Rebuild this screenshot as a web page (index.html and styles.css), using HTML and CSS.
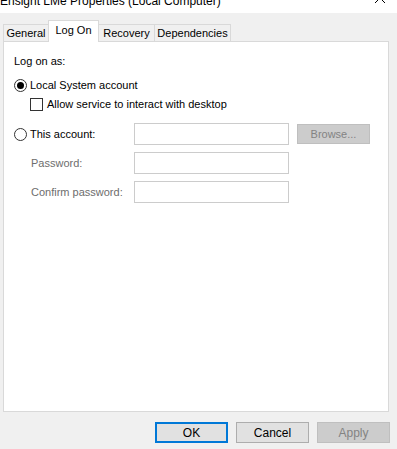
FILE: index.html
```html
<!DOCTYPE html>
<html>
<head>
<meta charset="utf-8">
<link rel="stylesheet" href="styles.css">
</head>
<body>
<div class="titlebar">
  <span class="title">Ensight LMe Properties (Local Computer)</span>
  <svg class="close" width="12" height="12" viewBox="0 0 12 12"><path d="M1 1 L11 11 M11 1 L1 11" stroke="#000" stroke-width="1" fill="none"/></svg>
</div>
<div class="tabs">
  <div class="tab t-general">General</div>
  <div class="tab active">Log On</div>
  <div class="tab t-recovery">Recovery</div>
  <div class="tab t-deps">Dependencies</div>
</div>
<div class="panel">
  <div class="heading">Log on as:</div>
  <div class="row radio-row r1">
    <span class="radio checked"></span><span>Local System account</span>
  </div>
  <div class="row check-row">
    <span class="checkbox"></span><span>Allow service to interact with desktop</span>
  </div>
  <div class="account">
    <div class="lbl radio-row"><span class="radio"></span><span>This account:</span></div>
    <div class="field"></div>
    <div class="btn disabled browse">Browse...</div>
    <div class="lbl dim">Password:</div>
    <div class="field"></div>
    <div></div>
    <div class="lbl dim">Confirm password:</div>
    <div class="field"></div>
    <div></div>
  </div>
</div>
<div class="footer">
  <div class="btn default">OK</div>
  <div class="btn">Cancel</div>
  <div class="btn disabled">Apply</div>
</div>
</body>
</html>
```
FILE: styles.css
```css
* { box-sizing: border-box; }
html, body { margin: 0; padding: 0; }
body {
  width: 397px;
  height: 449px;
  overflow: hidden;
  background: #f0f0f0;
  font-family: "Liberation Sans", Arial, sans-serif;
  font-size: 11px;
  color: #000;
}
.titlebar {
  position: relative;
  height: 13px;
  background: #fff;
  overflow: hidden;
}
.title {
  display: block;
  margin-top: -7px;
  font-size: 12px;
  line-height: 16px;
  color: #000;
  white-space: nowrap;
}
.close {
  position: absolute;
  left: 374px;
  top: -8px;
}
.tabs {
  display: flex;
  align-items: flex-end;
  margin: 7px 0 0 3px;
  height: 21px;
  position: relative;
  z-index: 1;
}
.tab {
  height: 17px;
  border: 1px solid #d9d9d9;
  border-bottom: none;
  background: #f0f0f0;
  display: flex;
  align-items: center;
  justify-content: center;
  white-space: nowrap;
  margin-right: -1px;
}
.t-general { width: 46px; }
.t-recovery { width: 57px; }
.t-deps { width: 77px; }
.tab.active {
  width: 51px;
  height: 22px;
  background: #fff;
  align-items: flex-start;
  padding-top: 3px;
  position: relative;
  z-index: 2;
  margin-bottom: -1px;
}
.panel {
  margin-left: 3px;
  width: 386px;
  height: 371px;
  background: #fff;
  border: 1px solid #d9d9d9;
  padding: 12px 0 0 10px;
}
.heading { line-height: 14px; }
.row { display: flex; align-items: center; }
.radio-row { display: flex; align-items: center; gap: 3px; }
.r1 { margin-top: 10px; height: 14px; }
.check-row { margin-top: 5px; margin-left: 16px; gap: 4px; height: 14px; }
.radio {
  width: 13px; height: 13px;
  border: 1px solid #333;
  border-radius: 50%;
  display: inline-flex;
  align-items: center;
  justify-content: center;
  background: #fff;
  flex: none;
}
.radio.checked::after {
  content: "";
  width: 7px; height: 7px;
  border-radius: 50%;
  background: #000;
}
.checkbox {
  width: 13px; height: 13px;
  border: 1px solid #333;
  background: #fff;
  flex: none;
}
.account {
  display: grid;
  grid-template-columns: 112px 155px 73px;
  column-gap: 8px;
  row-gap: 7px;
  grid-auto-rows: 22px;
  align-items: center;
  margin-top: 12px;
}
.lbl { line-height: 14px; white-space: nowrap; }
.dim { color: #6d6d6d; padding-left: 17px; }
.field {
  height: 22px;
  border: 1px solid #cccccc;
  background: #fff;
}
.btn {
  height: 21px;
  width: 73px;
  border: 1px solid #adadad;
  background: #e1e1e1;
  display: flex;
  align-items: center;
  justify-content: center;
  line-height: 14px;
  font-size: 12px;
}
.btn.disabled {
  background: #cccccc;
  border-color: #bfbfbf;
  color: #838383;
}
.browse { height: 20px; font-size: 11px; }
.footer {
  display: flex;
  justify-content: flex-end;
  gap: 8px;
  padding: 10px 7px 0 0;
}
.footer .btn { height: 21px; }
.btn.default { border: 2px solid #0078d7; }
```
